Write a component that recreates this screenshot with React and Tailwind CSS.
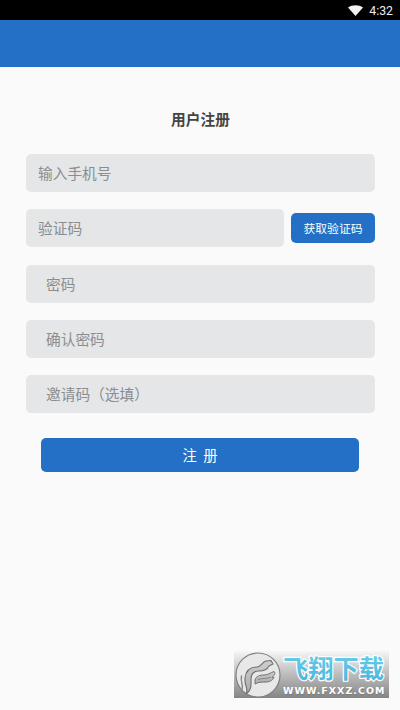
const fields = [
  { name: "password", type: "password", placeholder: "密码" },
  { name: "confirm", type: "password", placeholder: "确认密码" },
  { name: "invite", type: "text", placeholder: "邀请码（选填）" },
];

const inputClass =
  "block h-[38px] rounded-[5px] bg-[#e4e6e8] pb-px text-[14.7px] text-gray-800 outline-none placeholder:text-[#8b8d8f]";

function StatusBar() {
  return (
    <div className="flex h-5 items-center justify-end gap-[6px] bg-black pr-[7px]">
      <svg width="15" height="11" viewBox="0 0 15 11" fill="#f2f2f2">
        <path d="M0 2.6C4.3-.6 10.7-.6 15 2.6L7.5 11Z" />
      </svg>
      <span className="mt-[2px] font-['Roboto','Liberation_Sans',sans-serif] text-[12.3px] leading-none text-[#ededed]">
        4:32
      </span>
    </div>
  );
}

function Watermark() {
  return (
    <div className="absolute top-[651px] left-[234px] flex h-[47px] w-[155px] items-center bg-linear-to-b from-[#f6f6f6] via-[#bcbcbc] via-50% to-[#858585]">
      <svg
        className="ml-px shrink-0"
        width="46"
        height="46"
        viewBox="0 0 46 46"
        fill="none"
      >
        <defs>
          <linearGradient id="feather" x1="0" y1="0" x2="0" y2="1">
            <stop offset="0" stopColor="#cfcfcf" />
            <stop offset="1" stopColor="#aaa" />
          </linearGradient>
        </defs>
        <circle cx="23" cy="23" r="22" fill="#e8e8e8" stroke="#808080" strokeWidth="1.2" />
        <path
          d="M11 42C14 37 9 33 10 26C11 18 16 15 22 15C26 15 27 10 31 9L36 8.5L38 12L34 14C32 18 28 19 24 19C19 19 16 22 16 27C16 33 17 38 11 42Z"
          fill="url(#feather)"
          stroke="#6f6f6f"
          strokeWidth="1.1"
          strokeLinejoin="round"
        />
        <path
          d="M6.500 24C5 30 9 34 7 38"
          stroke="#858585"
          strokeWidth="1.4"
          strokeLinecap="round"
        />
        <path
          d="M20 28C21 24 25 23 29 23C33 23 35 21 39 19.500C41 21 39 24 37 25L39 25.500C37 29 34 30 31 30C27 30 23 30 20 32Z"
          fill="url(#feather)"
          stroke="#6f6f6f"
          strokeWidth="1"
          strokeLinejoin="round"
        />
        <path d="M23 27.500C28 26 32 27 36 25" stroke="#7c7c7c" strokeWidth=".9" />
      </svg>
      <div className="flex h-full flex-col">
        <svg width="108" height="34" viewBox="0 0 108 34" className="shrink-0 overflow-visible">
          <defs>
            <linearGradient id="brand" x1="0" y1="0" x2="0" y2="1">
              <stop offset="0" stopColor="#6fd0ea" />
              <stop offset="1" stopColor="#48b3dc" />
            </linearGradient>
          </defs>
          <text
            x="2"
            y="27"
            textLength="101"
            lengthAdjust="spacingAndGlyphs"
            fill="url(#brand)"
            stroke="#fff"
            strokeWidth="2.4"
            strokeLinejoin="round"
            paintOrder="stroke"
            fontSize="25"
            fontWeight="700"
            fontFamily="Noto Sans CJK SC, sans-serif"
          >
            飞翔下载
          </text>
        </svg>
        <span className="ml-[2px] h-[13px] font-['DejaVu_Sans',sans-serif] text-[9.5px] leading-[11px] font-bold tracking-[1px] whitespace-nowrap text-white [text-shadow:0.5px_0.5px_1px_#777]">
          WWW.FXXZ.COM
        </span>
      </div>
    </div>
  );
}

export default function App() {
  return (
    <div className="relative h-[710px] w-[400px] overflow-hidden bg-[#fafafa] font-['Noto_Sans_CJK_SC',sans-serif]">
      <StatusBar />
      <header className="h-[47px] bg-[#2370c6]" />

      <form
        className="flex flex-col pt-[41px] pr-[25px] pl-[26px]"
        onSubmit={(e) => e.preventDefault()}
      >
        <h1 className="mb-6 text-center text-[14.7px] leading-[22px] font-bold text-[#444]">
          用户注册
        </h1>

        <div className="flex flex-col gap-[17.3px]">
          <input
            name="phone"
            type="tel"
            placeholder="输入手机号"
            className={`${inputClass} w-full px-3`}
          />

          {/* SMS code */}
          <div className="flex items-center gap-[7px]">
            <input
              name="code"
              placeholder="验证码"
              className={`${inputClass} min-w-0 flex-1 px-3`}
            />
            <button
              type="button"
              className="h-[30px] w-[84px] rounded-[5px] bg-[#2370c6] text-[11.8px] text-white"
            >
              获取验证码
            </button>
          </div>

          {fields.map((f) => (
            <input
              key={f.name}
              name={f.name}
              type={f.type}
              placeholder={f.placeholder}
              className={`${inputClass} w-full px-5`}
            />
          ))}
        </div>

        <button
          type="submit"
          className="mt-[25px] mr-4 ml-[15px] h-[34px] rounded-[5px] bg-[#2370c6] text-[14.3px] whitespace-pre text-white"
        >
          {"注  册"}
        </button>
      </form>

      <Watermark />
    </div>
  );
}
